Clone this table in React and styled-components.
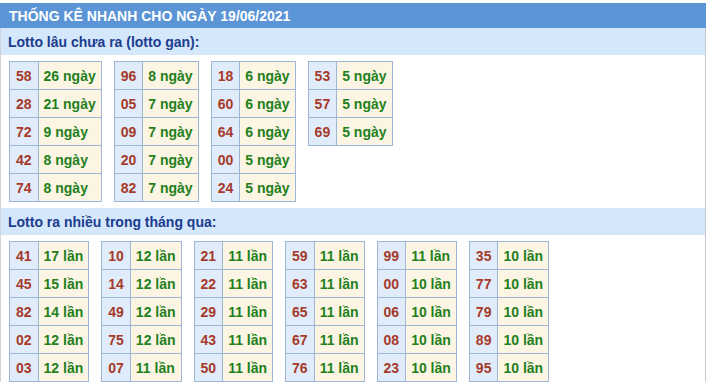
import React from "react";
import styled, { createGlobalStyle } from "styled-components";

const GlobalStyle = createGlobalStyle`
  body {
    margin: 0;
    background: #fff;
    font-family: "Liberation Sans", Arial, sans-serif;
  }
`;

const ganData = [
  [["58", "26 ngày"], ["28", "21 ngày"], ["72", "9 ngày"], ["42", "8 ngày"], ["74", "8 ngày"]],
  [["96", "8 ngày"], ["05", "7 ngày"], ["09", "7 ngày"], ["20", "7 ngày"], ["82", "7 ngày"]],
  [["18", "6 ngày"], ["60", "6 ngày"], ["64", "6 ngày"], ["00", "5 ngày"], ["24", "5 ngày"]],
  [["53", "5 ngày"], ["57", "5 ngày"], ["69", "5 ngày"]],
];

const nhieuData = [
  [["41", "17 lần"], ["45", "15 lần"], ["82", "14 lần"], ["02", "12 lần"], ["03", "12 lần"]],
  [["10", "12 lần"], ["14", "12 lần"], ["49", "12 lần"], ["75", "12 lần"], ["07", "11 lần"]],
  [["21", "11 lần"], ["22", "11 lần"], ["29", "11 lần"], ["43", "11 lần"], ["50", "11 lần"]],
  [["59", "11 lần"], ["63", "11 lần"], ["65", "11 lần"], ["67", "11 lần"], ["76", "11 lần"]],
  [["99", "11 lần"], ["00", "10 lần"], ["06", "10 lần"], ["08", "10 lần"], ["23", "10 lần"]],
  [["35", "10 lần"], ["77", "10 lần"], ["79", "10 lần"], ["89", "10 lần"], ["95", "10 lần"]],
];

const StatTable = ({ rows }) => (
  <Table>
    <tbody>
      {rows.map(([num, val]) => (
        <tr key={num}>
          <NumCell>{num}</NumCell>
          <ValueCell>{val}</ValueCell>
        </tr>
      ))}
    </tbody>
  </Table>
);

const App = () => (
  <>
    <GlobalStyle />
    <Wrapper>
      <Header>THỐNG KÊ NHANH CHO NGÀY 19/06/2021</Header>

      <SubHeader>Lotto lâu chưa ra (lotto gan):</SubHeader>
      <TableGroup>
        {ganData.map((rows, i) => (
          <StatTable key={i} rows={rows} />
        ))}
      </TableGroup>

      <SubHeader>Lotto ra nhiều trong tháng qua:</SubHeader>
      <TableGroup>
        {nhieuData.map((rows, i) => (
          <StatTable key={i} rows={rows} />
        ))}
      </TableGroup>
    </Wrapper>
  </>
);

const Wrapper = styled.div`
  width: 704px;
  margin-top: 3px;
  border-left: 1px solid #d0d3da;
  border-right: 1px solid #c4c7ce;
`;

const Header = styled.div`
  height: 25px;
  margin-left: -1px;
  margin-right: -1px;
  padding-left: 9px;
  display: flex;
  align-items: center;
  background: #5b95d5;
  color: #fff;
  font-size: 14px;
  font-weight: bold;
`;

const SubHeader = styled.div`
  height: 27px;
  padding-left: 7px;
  display: flex;
  align-items: center;
  background: #d4e7fb;
  color: #1c3c8e;
  font-size: 14px;
  font-weight: bold;
`;

const TableGroup = styled.div`
  display: flex;
  align-items: flex-start;
  gap: 12px;
  padding: 6px 8px 6px 8px;
`;

const Table = styled.table`
  border-collapse: collapse;
  font-size: 14px;
  font-weight: bold;
`;

const Cell = styled.td`
  height: 27px;
  border: 1px solid #9db6d6;
  white-space: nowrap;
  vertical-align: middle;
`;

const NumCell = styled(Cell)`
  padding: 0 6px;
  background: #e1ecfa;
  color: #a63a2a;
  text-align: center;
`;

const ValueCell = styled(Cell)`
  padding: 0 5px;
  background: #fdf5e3;
  color: #22801c;
`;

export default App;
